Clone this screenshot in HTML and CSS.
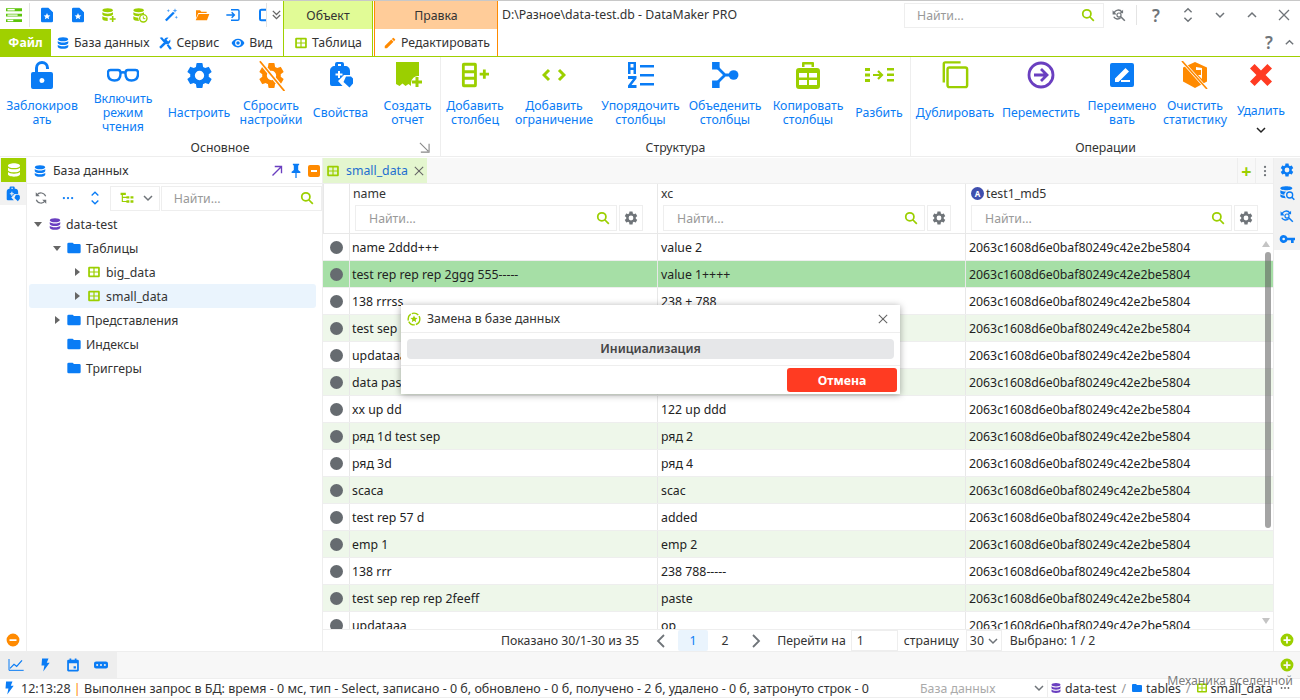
FILE: index.html
```html
<!DOCTYPE html>
<html lang="ru">

<head>
    <meta charset="UTF-8">
    <title>DataMaker PRO</title>
    <link rel="stylesheet" href="styles.css">
</head>

<body>
    <svg class="sprite">
        <symbol id="db" viewBox="0 0 24 24"><path d="M12 2c5 0 9 1.600 9 3.500S17 9 12 9 3 7.400 3 5.500 7 2 12 2zM3 8.500C4.500 10.300 8 11 12 11s7.500-.7 9-2.500V12c0 1.900-4 3.500-9 3.500S3 13.900 3 12zM3 15c1.500 1.800 5 2.500 9 2.500s7.500-.7 9-2.500v3.500c0 1.900-4 3.500-9 3.500s-9-1.600-9-3.500z"/></symbol>
        <symbol id="table" viewBox="0 0 24 24"><path fill-rule="evenodd" d="M4 3h16a2 2 0 012 2v14a2 2 0 01-2 2H4a2 2 0 01-2-2V5a2 2 0 012-2zm1 3v5h6V6zm8 0v5h6V6zM5 13v5h6v-5zm8 0v5h6v-5z"/></symbol>
        <symbol id="gear" viewBox="0 0 24 24"><path d="M19.140 12.940c.04-.3.06-.61.06-.94 0-.32-.02-.64-.07-.94l2.030-1.580a.49.49 0 00.12-.61l-1.920-3.320a.488.488 0 00-.59-.22l-2.390.96c-.5-.38-1.030-.7-1.620-.94l-.36-2.540a.484.484 0 00-.48-.41h-3.840c-.24 0-.43.17-.47.41l-.36 2.540c-.59.24-1.130.57-1.620.94l-2.390-.96c-.22-.08-.47 0-.59.22L2.740 8.870c-.12.21-.08.47.12.61l2.030 1.580c-.05.3-.09.63-.09.94s.02.64.07.94l-2.030 1.580a.49.49 0 00-.12.61l1.920 3.320c.12.22.37.29.59.22l2.390-.96c.5.38 1.030.7 1.620.94l.36 2.540c.05.24.24.41.48.41h3.840c.24 0 .44-.17.47-.41l.36-2.540c.59-.24 1.130-.56 1.620-.94l2.390.96c.22.08.47 0 .59-.22l1.920-3.320c.12-.22.07-.47-.12-.61zM12 15.600a3.600 3.600 0 110-7.200 3.600 3.600 0 010 7.200z"/></symbol>
        <symbol id="search" viewBox="0 0 24 24"><circle cx="10" cy="10" r="7" fill="none" stroke="currentColor" stroke-width="3"/><path d="M15 15l7 7" stroke="currentColor" stroke-width="3"/></symbol>
        <symbol id="folder" viewBox="0 0 24 24"><path d="M10 4H4a2 2 0 00-2 2v12a2 2 0 002 2h16a2 2 0 002-2V8a2 2 0 00-2-2h-8z"/></symbol>
        <symbol id="bolt" viewBox="0 0 24 24"><path d="M7 1h11l-3 7h5L9 23l2-10H6z"/></symbol>
        <symbol id="chev-down" viewBox="0 0 12 12"><path d="M2 4l4 4 4-4" fill="none" stroke="currentColor" stroke-width="1.500"/></symbol>
        <symbol id="chev-up" viewBox="0 0 12 12"><path d="M2 8l4-4 4 4" fill="none" stroke="currentColor" stroke-width="1.500"/></symbol>
        <symbol id="chev-left" viewBox="0 0 10 14"><path d="M8 1L2 7l6 6" fill="none" stroke="currentColor" stroke-width="1.800"/></symbol>
        <symbol id="chev-right" viewBox="0 0 10 14"><path d="M2 1l6 6-6 6" fill="none" stroke="currentColor" stroke-width="1.800"/></symbol>
        <symbol id="chev-double" viewBox="0 0 12 12"><path d="M2 1.500l4 4 4-4M2 6l4 4 4-4" fill="none" stroke="currentColor" stroke-width="1.400"/></symbol>
        <symbol id="updown" viewBox="0 0 12 20"><path d="M2 7l4-4 4 4M2 13l4 4 4-4" fill="none" stroke="currentColor" stroke-width="1.600"/></symbol>
        <symbol id="close" viewBox="0 0 12 12"><path d="M1 1l10 10M11 1L1 11" fill="none" stroke="currentColor" stroke-width="1.300"/></symbol>
        <symbol id="page" viewBox="0 0 24 24"><path fill-rule="evenodd" d="M5 1h9l7 7v13a2 2 0 01-2 2H5a2 2 0 01-2-2V3a2 2 0 012-2zm7 8l-1.500 3.200-3.500.4 2.600 2.300-.7 3.400 3.100-1.700 3.100 1.700-.7-3.400 2.600-2.300-3.500-.4z"/></symbol>
        <symbol id="db-plus" viewBox="0 0 24 24"><path d="M10 2c4.500 0 8 1.300 8 3s-3.500 3-8 3-8-1.300-8-3 3.500-3 8-3zM2 8c1.500 1.300 4.500 2 8 2s6.500-.7 8-2v3c0 1.500-3.500 3-8 3s-8-1.500-8-3zm0 6c1.500 1.300 4.500 2 8 2v5c-4.500 0-8-1.300-8-3z"/><path d="M13 18h9M17.500 13.500v9" stroke="currentColor" stroke-width="2.400"/></symbol>
        <symbol id="db-clock" viewBox="0 0 24 24"><path d="M10 2c4.500 0 8 1.300 8 3s-3.500 3-8 3-8-1.300-8-3 3.500-3 8-3zM2 8c1.500 1.300 4.500 2 8 2s6.500-.7 8-2v3c-4 0-7 1.500-8 3-4.500 0-8-1.500-8-3zm0 6c1.500 1.300 4.500 2 7.500 2 0 2 .3 3.500 1 5-5-.1-8.500-1.300-8.500-3z"/><circle cx="17" cy="17" r="5.500" fill="none" stroke="currentColor" stroke-width="2"/><path d="M17 14v3.500h3" fill="none" stroke="currentColor" stroke-width="1.500"/></symbol>
        <symbol id="wand" viewBox="0 0 24 24"><path d="M3 19L15 7l2.500 2.500-12 12z"/><path d="M18 2l1 2.500 2.500 1-2.500 1-1 2.500-1-2.500-2.500-1 2.500-1zM8 3l.7 1.800 1.800.7-1.800.7L8 8l-.7-1.800-1.800-.7 1.800-.7zM20 13l.7 1.800 1.800.7-1.800.7-.7 1.800-.7-1.800-1.800-.7 1.800-.7z" opacity=".75"/></symbol>
        <symbol id="open" viewBox="0 0 24 24"><path d="M3 5h6l2 2h8v2H6.500L3 17z"/><path d="M7 10.500h16L19.500 20H2.500z"/></symbol>
        <symbol id="import" viewBox="0 0 24 24"><path d="M9 4h10a2 2 0 012 2v12a2 2 0 01-2 2H9" fill="none" stroke="currentColor" stroke-width="2.200"/><path d="M2 12h11M10 8l4 4-4 4" fill="none" stroke="currentColor" stroke-width="2.200"/></symbol>
        <symbol id="export-box" viewBox="0 0 24 24"><path d="M24 4H5a2 2 0 00-2 2v12a2 2 0 002 2h19" fill="none" stroke="currentColor" stroke-width="3"/><path d="M14 12h10" stroke="currentColor" stroke-width="3"/></symbol>
        <symbol id="tools" viewBox="0 0 24 24"><path d="M21 6l-3.500 3.500-3-3L18 3a6 6 0 00-7.800 7.500L2 19l3 3 8.500-8.200A6 6 0 0021 6z"/><path d="M3 3l4-1 5 6-2.500 2.500zM15 16l2.500-2.500 5 6a2 2 0 01-3 3z"/></symbol>
        <symbol id="eye" viewBox="0 0 24 24"><path fill-rule="evenodd" d="M12 4.500c5 0 9.300 3.100 11 7.500-1.700 4.400-6 7.500-11 7.500S2.700 16.400 1 12c1.700-4.400 6-7.500 11-7.500zM12 7a5 5 0 100 10 5 5 0 000-10zm0 2a3 3 0 110 6 3 3 0 010-6z"/></symbol>
        <symbol id="pencil" viewBox="0 0 24 24"><path d="M3 17.200V21h3.800L18 9.800 14.200 6zM20.700 7a1 1 0 000-1.400l-2.300-2.300a1 1 0 00-1.400 0l-1.800 1.800L19 8.800z"/></symbol>
        <symbol id="lock" viewBox="0 0 24 30"><path fill-rule="evenodd" d="M3 12h2V8a7 7 0 0114 0v1h-3V8a4 4 0 00-8 0v4h13a2 2 0 012 2v13a2 2 0 01-2 2H3a2 2 0 01-2-2V14a2 2 0 012-2zm9 6a2.500 2.500 0 100 5 2.500 2.500 0 000-5z"/></symbol>
        <symbol id="glasses" viewBox="0 0 32 16"><path d="M1 5.500c0-1.500 1-2.500 2.500-2.500H11c1.500 0 2.500 1 2.500 3v1c0 4-2 6.500-6 6.500S1 11 1 7zM18.500 7V6c0-2 1-3 2.500-3h7.500C30 3 31 4 31 5.500V7c0 4-2.500 6.500-6.500 6.500s-6-2.500-6-6.500zM13.500 6c1.500-1 3.500-1 5 0" fill="none" stroke="currentColor" stroke-width="2.400"/></symbol>
        <symbol id="gear-off" viewBox="0 0 24 24"><use href="#gear"/><path d="M3 1l19 23" stroke="#fff" stroke-width="3.200"/><path d="M3 1l19 23" stroke="currentColor" stroke-width="1.400"/></symbol>
        <symbol id="case" viewBox="0 0 24 28"><path fill-rule="evenodd" d="M8 1h5a2 2 0 012 2v2h1c3 0 5 2 5 5v4h-6l-6 6 4.500 5H3a2 2 0 01-2-2V10c0-3 2-5 5-5V3a2 2 0 012-2zm1 2v2h3V3zM9 10v2.500H6.500v2H9V17h2v-2.500h2.500v-2H11V10zM17 15.500h5l2 2v5l-3.500 4-6-5.500z"/></symbol>
        <symbol id="report" viewBox="0 0 28 28"><path d="M2 1h23v14a7 7 0 00-8 7v3l-2.500-2-3 2-3-2.500-3 2.500-3.500-2z"/><path d="M18 21h10M23 16v10" stroke="currentColor" stroke-width="3"/></symbol>
        <symbol id="col-add" viewBox="0 0 30 28"><path fill-rule="evenodd" d="M3 1h12a2 2 0 012 2v22a2 2 0 01-2 2H3a2 2 0 01-2-2V3a2 2 0 012-2zm1 3v5h10V4zm0 8v4h10v-4zm0 7v5h10v-5z"/><path d="M20 13h10M25 8v10" stroke="currentColor" stroke-width="3"/></symbol>
        <symbol id="code" viewBox="0 0 24 14"><path d="M7 2L2 7l5 5M17 2l5 5-5 5" fill="none" stroke="currentColor" stroke-width="3"/></symbol>
        <symbol id="sort" viewBox="0 0 28 28"><path fill-rule="evenodd" d="M1 1h8v12H6.500V9h-3v4H1zm2.500 2v3.500h3V3z"/><path d="M1 15h8.500v2.500L4.500 24h5v3H1v-2.500L6 18H1z"/><path d="M13 4h14v2.500H13zM13 13h14v2.500H13zM13 22h14v2.500H13z"/></symbol>
        <symbol id="merge" viewBox="0 0 26 26"><path d="M1 1h7v7H1zM1 18h7v7H1z"/><circle cx="21" cy="13" r="4.500"/><path d="M6 6l7 7-7 7M13 13h6" fill="none" stroke="currentColor" stroke-width="2.600"/></symbol>
        <symbol id="col-copy" viewBox="0 0 26 28"><path fill-rule="evenodd" d="M8 1h10a1 1 0 011 1v4h-2.500V3.500h-7V6H7V2a1 1 0 011-1zM4 7h18a3 3 0 013 3v15a3 3 0 01-3 3H4a3 3 0 01-3-3V10a3 3 0 013-3zm0 5v4.500h8V12zm10 0v4.500h8V12zM4 19v5h8v-5zm10 0v5h8v-5z"/></symbol>
        <symbol id="split" viewBox="0 0 30 20"><path d="M1 3h5v3H1zM1 8.500h5v3H1zM1 14h5v3H1zM23 3h7v2.500h-7zM23 8.500h7V11h-7zM23 14h7v2.500h-7z"/><path d="M9 10h8M14 6l4 4-4 4" fill="none" stroke="currentColor" stroke-width="2.200"/></symbol>
        <symbol id="copy" viewBox="0 0 28 30"><path d="M8 7h17a2 2 0 012 2v17a2 2 0 01-2 2H8a2 2 0 01-2-2V9a2 2 0 012-2z" fill="none" stroke="currentColor" stroke-width="2.600"/><path d="M2 23V3a1.500 1.500 0 011.500-1.500H20" fill="none" stroke="currentColor" stroke-width="2.600"/></symbol>
        <symbol id="move" viewBox="0 0 28 28"><circle cx="14" cy="14" r="12" fill="none" stroke="currentColor" stroke-width="2.800"/><path d="M7 14h13M14 8l6 6-6 6" fill="none" stroke="currentColor" stroke-width="2.800"/></symbol>
        <symbol id="rename" viewBox="0 0 24 24"><path fill-rule="evenodd" d="M2 0h20a2 2 0 012 2v20a2 2 0 01-2 2H2a2 2 0 01-2-2V2a2 2 0 012-2zm13.500 5L5 15.500V19h3.500L19 8.500zM11 17v2h9v-2z"/></symbol>
        <symbol id="clear" viewBox="0 0 26 28"><path fill-rule="evenodd" d="M13 1l12 5.500v14L13 27 1 20.500v-14zM14 6v3h5v5h-3l4 4V7z"/><path d="M0 0l25 28" stroke="#fff" stroke-width="3"/><path d="M0 0l25 28" stroke="currentColor" stroke-width="1.600"/></symbol>
        <symbol id="cross" viewBox="0 0 24 24"><path d="M5 0l7 7 7-7 5 5-7 7 7 7-5 5-7-7-7 7-5-5 7-7-7-7z"/></symbol>
        <symbol id="refresh" viewBox="0 0 24 24"><path d="M20 9a8.500 8.500 0 00-15-2M4 15a8.500 8.500 0 0015 2" fill="none" stroke="currentColor" stroke-width="2"/><path d="M3 2v7h7M21 22v-7h-7"/></symbol>
        <symbol id="find-replace" viewBox="0 0 24 24"><path d="M17 7a7.500 7.500 0 00-13.500 2M3 15a7.500 7.500 0 0012 1.500" fill="none" stroke="currentColor" stroke-width="2.400"/><path d="M1 4v7h7zM19 3v6h-6z"/><circle cx="12" cy="12" r="3.500" fill="none" stroke="currentColor" stroke-width="2"/><path d="M15 15l7 7" stroke="currentColor" stroke-width="2.600"/></symbol>
        <symbol id="tree" viewBox="0 0 24 20"><path d="M1 1h9v4H1zM3 5h2v12H3zM3 8h8v2H3zM3 15h8v2H3zM11 7h5v4h-5zM11 14h5v4h-5zM18 7h5v4h-5zM18 14h5v4h-5z"/></symbol>
        <symbol id="arrow-ne" viewBox="0 0 16 16"><path d="M2 14L13 3M5 2h9v9" fill="none" stroke="currentColor" stroke-width="1.800"/></symbol>
        <symbol id="arrow-se" viewBox="0 0 12 12"><path d="M1 1l9 9M2 11h9V2" fill="none" stroke="currentColor" stroke-width="1.200"/></symbol>
        <symbol id="pin" viewBox="0 0 16 24"><path d="M3 1h10v2l-1.500 1v7L15 14v2H9v8H7v-8H1v-2l3.500-3V4L3 3z"/></symbol>
        <symbol id="caret-d" viewBox="0 0 8 8"><path d="M0 2h8L4 7z"/></symbol>
        <symbol id="caret-r" viewBox="0 0 8 8"><path d="M2 0v8l5-4z"/></symbol>
        <symbol id="dots" viewBox="0 0 16 4"><circle cx="2.500" cy="2" r="1.500"/><circle cx="8" cy="2" r="1.500"/><circle cx="13.500" cy="2" r="1.500"/></symbol>
        <symbol id="kebab" viewBox="0 0 4 16"><circle cx="2" cy="2.500" r="1.500"/><circle cx="2" cy="8" r="1.500"/><circle cx="2" cy="13.500" r="1.500"/></symbol>
        <symbol id="key" viewBox="0 0 24 14"><path fill-rule="evenodd" d="M7 1a6 6 0 015.700 4H24v4h-2v4h-4V9h-5.300A6 6 0 117 1zm0 4a2 2 0 100 4 2 2 0 000-4z"/></symbol>
        <symbol id="db-find" viewBox="0 0 24 24"><path d="M11 2c5 0 9 1.300 9 3s-4 3-9 3-9-1.300-9-3 4-3 9-3zM2 8c1.500 1.300 5 2 9 2-2 1-3 2.500-3 4.500-3.500-.2-6-1.500-6-3zm0 6c1.500 1.200 4 1.800 6.500 2 .3 1.500 1 3 2 4C6 20 2 18.700 2 17z"/><circle cx="16" cy="15" r="4.500" fill="none" stroke="currentColor" stroke-width="2"/><path d="M19 18l4 4" stroke="currentColor" stroke-width="2.200"/></symbol>
        <symbol id="chart" viewBox="0 0 24 20"><path d="M1.500 1v17h22" fill="none" stroke="currentColor" stroke-width="1.500"/><path d="M3 15l6-6 4 3 8-9" fill="none" stroke="currentColor" stroke-width="1.800"/></symbol>
        <symbol id="calendar" viewBox="0 0 24 24"><path fill-rule="evenodd" d="M6 1h3v2h6V1h3v2h2a2 2 0 012 2v16a2 2 0 01-2 2H4a2 2 0 01-2-2V5a2 2 0 012-2h2zM5 9v11h14V9zm8 5h4v4h-4z"/></symbol>
        <symbol id="pill-dots" viewBox="0 0 20 12"><path fill-rule="evenodd" d="M3 1h14a3 3 0 013 3v4a3 3 0 01-3 3H3a3 3 0 01-3-3V4a3 3 0 013-3zm1.500 3.500a1.500 1.500 0 100 3 1.500 1.500 0 000-3zm5.500 0a1.500 1.500 0 100 3 1.500 1.500 0 000-3zm5.500 0a1.500 1.500 0 100 3 1.500 1.500 0 000-3z"/></symbol>
        <symbol id="minus-circle" viewBox="0 0 24 24"><path fill-rule="evenodd" d="M12 1a11 11 0 110 22 11 11 0 010-22zM6 10.500v3h12v-3z"/></symbol>
        <symbol id="plus-circle" viewBox="0 0 24 24"><path fill-rule="evenodd" d="M12 1a11 11 0 110 22 11 11 0 010-22zm-1.500 5v4.500H6v3h4.500V18h3v-4.500H18v-3h-4.500V6z"/></symbol>
        <symbol id="star-ring" viewBox="0 0 24 24"><circle cx="12" cy="12" r="10" fill="none" stroke="currentColor" stroke-width="2.400" stroke-dasharray="12 2"/><path d="M12 6l1.800 4 4.200.4-3.200 2.800 1 4.300-3.800-2.300-3.800 2.300 1-4.300L6 10.400l4.200-.4z"/></symbol>
    </svg>

    <header class="top">
        <div class="top-left">
            <div class="quick">
                <svg class="menu-icon" viewBox="0 0 22 20"><path d="M0 0h22v4H0zM0 7.500h22v4H0zM0 15h22v4H0z" fill="#5cc40a"/><path d="M2 1h10v2H2zM2 8.500h14v2H2zM2 16h8v2H2z" fill="#fff"/></svg>
                <span class="quick-sep"></span>
                <svg class="qi blue"><use href="#page"/></svg>
                <svg class="qi blue"><use href="#page"/></svg>
                <svg class="qi green"><use href="#db-plus"/></svg>
                <svg class="qi green"><use href="#db-clock"/></svg>
                <svg class="qi blue"><use href="#wand"/></svg>
                <svg class="qi orange"><use href="#open"/></svg>
                <svg class="qi blue"><use href="#import"/></svg>
                <span class="qi-cut"><svg class="qi blue"><use href="#export-box"/></svg></span>
                <span class="quick-sep2"></span>
                <svg class="qi-more"><use href="#chev-double"/></svg>
            </div>
            <nav class="menu">
                <span class="menu-file">Файл</span>
                <span class="menu-item"><svg class="i14 blue"><use href="#db"/></svg>База данных</span>
                <span class="menu-item"><svg class="i14 blue"><use href="#tools"/></svg>Сервис</span>
                <span class="menu-item"><svg class="i14 blue"><use href="#eye"/></svg>Вид</span>
            </nav>
        </div>
        <div class="ctx ctx-object">
            <div class="ctx-title">Объект</div>
            <div class="ctx-tab"><svg class="i14 green"><use href="#table"/></svg>Таблица</div>
        </div>
        <div class="ctx ctx-edit">
            <div class="ctx-title">Правка</div>
            <div class="ctx-tab"><svg class="i14 orange"><use href="#pencil"/></svg>Редактировать</div>
        </div>
        <div class="top-right">
            <div class="title-row">
                <span class="app-title">D:\Разное\data-test.db - DataMaker PRO</span>
                <div class="top-search"><span>Найти...</span><svg class="i14 green"><use href="#search"/></svg></div>
                <svg class="i14 grey find-replace"><use href="#find-replace"/></svg>
                <span class="title-sep"></span>
                <span class="help">?</span>
                <svg class="win updown"><use href="#updown"/></svg>
                <svg class="win"><use href="#chev-down"/></svg>
                <svg class="win"><use href="#chev-up"/></svg>
                <svg class="win"><use href="#close"/></svg>
            </div>
            <div class="sub-row">
                <span class="help">?</span>
                <svg class="win-small"><use href="#chev-up"/></svg>
            </div>
        </div>
    </header>

    <section class="ribbon">
        <div class="group group-main">
            <div class="btns">
                <div class="btn"><div class="btn-icon"><svg class="blue ic-lock"><use href="#lock"/></svg></div><div class="btn-label">Заблокиров<br>ать</div></div>
                <div class="btn"><div class="btn-icon"><svg class="blue ic-glasses"><use href="#glasses"/></svg></div><div class="btn-label">Включить<br>режим<br>чтения</div></div>
                <div class="btn"><div class="btn-icon"><svg class="blue ic-gear"><use href="#gear"/></svg></div><div class="btn-label">Настроить</div></div>
                <div class="btn"><div class="btn-icon"><svg class="orange ic-gear"><use href="#gear-off"/></svg></div><div class="btn-label">Сбросить<br>настройки</div></div>
                <div class="btn"><div class="btn-icon"><svg class="blue ic-big"><use href="#case"/></svg></div><div class="btn-label">Свойства</div></div>
                <div class="btn"><div class="btn-icon"><svg class="green ic-big"><use href="#report"/></svg></div><div class="btn-label">Создать<br>отчет</div></div>
            </div>
            <div class="group-name">Основное<svg class="expand"><use href="#arrow-se"/></svg></div>
        </div>
        <div class="group group-struct">
            <div class="btns">
                <div class="btn"><div class="btn-icon"><svg class="green ic-big"><use href="#col-add"/></svg></div><div class="btn-label">Добавить<br>столбец</div></div>
                <div class="btn"><div class="btn-icon"><svg class="green ic-code"><use href="#code"/></svg></div><div class="btn-label">Добавить<br>ограничение</div></div>
                <div class="btn"><div class="btn-icon"><svg class="blue ic-big"><use href="#sort"/></svg></div><div class="btn-label">Упорядочить<br>столбцы</div></div>
                <div class="btn"><div class="btn-icon"><svg class="blue ic-big"><use href="#merge"/></svg></div><div class="btn-label">Объеденить<br>столбцы</div></div>
                <div class="btn"><div class="btn-icon"><svg class="green ic-big"><use href="#col-copy"/></svg></div><div class="btn-label">Копировать<br>столбцы</div></div>
                <div class="btn"><div class="btn-icon"><svg class="green ic-split"><use href="#split"/></svg></div><div class="btn-label">Разбить</div></div>
            </div>
            <div class="group-name">Структура</div>
        </div>
        <div class="group group-ops">
            <div class="btns">
                <div class="btn"><div class="btn-icon"><svg class="green ic-big"><use href="#copy"/></svg></div><div class="btn-label">Дублировать</div></div>
                <div class="btn"><div class="btn-icon"><svg class="purple ic-big"><use href="#move"/></svg></div><div class="btn-label">Переместить</div></div>
                <div class="btn"><div class="btn-icon"><svg class="blue ic-rename"><use href="#rename"/></svg></div><div class="btn-label">Переимено<br>вать</div></div>
                <div class="btn"><div class="btn-icon"><svg class="orange ic-big"><use href="#clear"/></svg></div><div class="btn-label">Очистить<br>статистику</div></div>
                <div class="btn btn-delete"><div class="btn-icon"><svg class="red ic-cross"><use href="#cross"/></svg></div><div class="btn-label">Удалить<svg class="del-more"><use href="#chev-down"/></svg></div></div>
            </div>
            <div class="group-name">Операции</div>
        </div>
    </section>

    <main class="work">
        <aside class="strip strip-left">
            <div class="strip-top">
                <div class="strip-item active"><svg class="i16 white"><use href="#db"/></svg></div>
                <div class="strip-item"><svg class="i16 blue"><use href="#case"/></svg></div>
            </div>
            <svg class="i14 orange strip-bottom"><use href="#minus-circle"/></svg>
        </aside>

        <aside class="db-panel">
            <div class="panel-head">
                <svg class="i14 blue"><use href="#db"/></svg>
                <span class="panel-title">База данных</span>
                <svg class="i12 purple"><use href="#arrow-ne"/></svg>
                <svg class="pin blue"><use href="#pin"/></svg>
                <span class="minus-box"></span>
            </div>
            <div class="panel-tools">
                <svg class="i14 grey"><use href="#refresh"/></svg>
                <svg class="i12 blue tool-dots"><use href="#dots"/></svg>
                <svg class="tool-updown blue"><use href="#updown"/></svg>
                <div class="tree-mode"><svg class="i14 green"><use href="#tree"/></svg><svg class="i12 grey"><use href="#chev-down"/></svg></div>
                <div class="panel-search"><span>Найти...</span><svg class="i14 green"><use href="#search"/></svg></div>
            </div>
            <ul class="tree">
                <li class="lvl0"><svg class="caret"><use href="#caret-d"/></svg><svg class="i14 purple"><use href="#db"/></svg>data-test</li>
                <li class="lvl1"><svg class="caret"><use href="#caret-d"/></svg><svg class="i14 blue"><use href="#folder"/></svg>Таблицы</li>
                <li class="lvl2"><svg class="caret"><use href="#caret-r"/></svg><svg class="i14 green"><use href="#table"/></svg>big_data</li>
                <li class="lvl2 selected"><svg class="caret"><use href="#caret-r"/></svg><svg class="i14 green"><use href="#table"/></svg>small_data</li>
                <li class="lvl1"><svg class="caret"><use href="#caret-r"/></svg><svg class="i14 blue"><use href="#folder"/></svg>Представления</li>
                <li class="lvl1"><span class="caret"></span><svg class="i14 blue"><use href="#folder"/></svg>Индексы</li>
                <li class="lvl1"><span class="caret"></span><svg class="i14 blue"><use href="#folder"/></svg>Триггеры</li>
            </ul>
        </aside>

        <section class="data">
            <div class="tabs">
                <div class="tab"><svg class="i14 green"><use href="#table"/></svg><span>small_data</span><svg class="tab-close"><use href="#close"/></svg></div>
                <div class="tabs-end">
                    <span class="tabs-btn"><b class="plus">+</b></span>
                    <span class="tabs-btn"><svg class="i12 grey"><use href="#kebab"/></svg></span>
                </div>
            </div>
            <div class="cols">
                <div class="col-cell"></div>
                <div class="col-cell">
                    <div class="col-name">name</div>
                    <div class="col-filter"><div class="filter-input"><span>Найти...</span><svg class="i14 green"><use href="#search"/></svg></div><div class="filter-gear"><svg class="i16 grey"><use href="#gear"/></svg></div></div>
                </div>
                <div class="col-cell">
                    <div class="col-name">xc</div>
                    <div class="col-filter"><div class="filter-input"><span>Найти...</span><svg class="i14 green"><use href="#search"/></svg></div><div class="filter-gear"><svg class="i16 grey"><use href="#gear"/></svg></div></div>
                </div>
                <div class="col-cell">
                    <div class="col-name"><span class="col-badge">A</span>test1_md5</div>
                    <div class="col-filter"><div class="filter-input"><span>Найти...</span><svg class="i14 green"><use href="#search"/></svg></div><div class="filter-gear"><svg class="i16 grey"><use href="#gear"/></svg></div></div>
                </div>
            </div>
            <div class="rows">
                <div class="row"><div class="mark"><i></i></div><div>name 2ddd+++</div><div>value 2</div><div>2063c1608d6e0baf80249c42e2be5804</div></div>
                <div class="row sel"><div class="mark"><i></i></div><div>test rep rep rep 2ggg 555-----</div><div>value 1++++</div><div>2063c1608d6e0baf80249c42e2be5804</div></div>
                <div class="row"><div class="mark"><i></i></div><div>138 rrrss</div><div>238 + 788</div><div>2063c1608d6e0baf80249c42e2be5804</div></div>
                <div class="row alt"><div class="mark"><i></i></div><div>test sep rep rep</div><div>paste</div><div>2063c1608d6e0baf80249c42e2be5804</div></div>
                <div class="row"><div class="mark"><i></i></div><div>updataaa</div><div>op</div><div>2063c1608d6e0baf80249c42e2be5804</div></div>
                <div class="row alt"><div class="mark"><i></i></div><div>data paste</div><div>value</div><div>2063c1608d6e0baf80249c42e2be5804</div></div>
                <div class="row"><div class="mark"><i></i></div><div>xx up dd</div><div>122 up ddd</div><div>2063c1608d6e0baf80249c42e2be5804</div></div>
                <div class="row alt"><div class="mark"><i></i></div><div>ряд 1d test sep</div><div>ряд 2</div><div>2063c1608d6e0baf80249c42e2be5804</div></div>
                <div class="row"><div class="mark"><i></i></div><div>ряд 3d</div><div>ряд 4</div><div>2063c1608d6e0baf80249c42e2be5804</div></div>
                <div class="row alt"><div class="mark"><i></i></div><div>scaca</div><div>scac</div><div>2063c1608d6e0baf80249c42e2be5804</div></div>
                <div class="row"><div class="mark"><i></i></div><div>test rep 57 d</div><div>added</div><div>2063c1608d6e0baf80249c42e2be5804</div></div>
                <div class="row alt"><div class="mark"><i></i></div><div>emp 1</div><div>emp 2</div><div>2063c1608d6e0baf80249c42e2be5804</div></div>
                <div class="row"><div class="mark"><i></i></div><div>138 rrr</div><div>238 788-----</div><div>2063c1608d6e0baf80249c42e2be5804</div></div>
                <div class="row alt"><div class="mark"><i></i></div><div>test sep rep rep 2feeff</div><div>paste</div><div>2063c1608d6e0baf80249c42e2be5804</div></div>
                <div class="row"><div class="mark"><i></i></div><div>updataaa</div><div>op</div><div>2063c1608d6e0baf80249c42e2be5804</div></div>
                <span class="scroll-up"></span>
                <span class="scroll-thumb"></span>
                <span class="scroll-down"></span>
            </div>
            <div class="pager">
                <span>Показано 30/1-30 из 35</span>
                <svg class="pager-arrow prev"><use href="#chev-left"/></svg>
                <span class="page-num current">1</span>
                <span class="page-num">2</span>
                <svg class="pager-arrow next"><use href="#chev-right"/></svg>
                <span class="goto">Перейти на</span>
                <span class="goto-input">1</span>
                <span class="goto-after">страницу</span>
                <span class="page-size">30<svg class="i12 grey"><use href="#chev-down"/></svg></span>
                <span class="picked">Выбрано: 1 / 2</span>
            </div>
        </section>

        <aside class="strip strip-right">
            <div class="strip-top">
                <div class="strip-item"><svg class="i16 blue"><use href="#gear"/></svg></div>
                <div class="strip-item"><svg class="i16 blue"><use href="#db-find"/></svg></div>
                <div class="strip-item"><svg class="i14 blue"><use href="#find-replace"/></svg></div>
                <div class="strip-item"><svg class="i16 blue"><use href="#key"/></svg></div>
            </div>
            <svg class="i14 green strip-bottom"><use href="#plus-circle"/></svg>
        </aside>
    </main>

    <div class="tool-strip">
        <div class="tool-icons">
            <svg class="i16 blue"><use href="#chart"/></svg>
            <svg class="i14 blue"><use href="#bolt"/></svg>
            <svg class="i14 blue"><use href="#calendar"/></svg>
            <svg class="i14 blue"><use href="#pill-dots"/></svg>
        </div>
        <svg class="i14 green tool-plus"><use href="#plus-circle"/></svg>
    </div>

    <footer class="status">
        <svg class="i14 blue"><use href="#bolt"/></svg>
        <span class="status-text">12:13:28 <b class="bar">|</b> Выполнен запрос в БД: время - 0 мс, тип - Select, записано - 0 б, обновлено - 0 б, получено - 2 б, удалено - 0 б, затронуто строк - 0</span>
        <div class="status-combo"><span>База данных</span><svg class="i12 grey"><use href="#chev-down"/></svg></div>
        <div class="crumbs">
            <svg class="i12 purple"><use href="#db"/></svg><span>data-test</span><em>/</em>
            <svg class="i12 blue"><use href="#folder"/></svg><span>tables</span><em>/</em>
            <svg class="i12 green"><use href="#table"/></svg><span>small_data</span>
        </div>
        <svg class="status-dots"><use href="#dots"/></svg>
    </footer>

    <div class="dialog">
        <div class="dialog-head">
            <svg class="i14 green"><use href="#star-ring"/></svg>
            <span class="dialog-title">Замена в базе данных</span>
            <svg class="dialog-close"><use href="#close"/></svg>
        </div>
        <div class="dialog-body"><div class="progress">Инициализация</div></div>
        <div class="dialog-foot"><button class="cancel">Отмена</button></div>
    </div>

    <div class="watermark">Механика вселенной</div>
</body>

</html>
```

FILE: styles.css
```css
* {
    box-sizing: border-box;
}

body {
    margin: 0;
    width: 1300px;
    height: 700px;
    overflow: hidden;
    position: relative;
    background-color: white;
    font-family: "Noto Sans", "Open Sans", sans-serif;
    font-size: 12.3px;
    color: #333;
}

svg {
    display: block;
    flex: none;
    fill: currentColor;
}

.sprite {
    display: none;
}

.blue { color: #0a7cf5; }
.green { color: #9bcf00; }
.orange { color: #ff8a00; }
.purple { color: #6a3fc0; }
.red { color: #ff3b22; }
.grey { color: #6f7479; }
.white { color: white; }

.i12 { width: 12px; height: 12px; }
.i14 { width: 14px; height: 14px; }
.i16 { width: 16px; height: 16px; }

/* top bar */
.top {
    display: flex;
    height: 57px;
    border-top: 1px solid #c8c8c8;
    border-bottom: 1px solid #a0d000;
}

.top-left {
    width: 284px;
    border-right: 1px solid #a0d000;
    flex: none;
}

.quick {
    height: 28px;
    display: flex;
    align-items: center;
}

.menu-icon {
    width: 16px;
    height: 15px;
    margin-left: 6px;
}

.quick-sep {
    width: 1px;
    height: 24px;
    background-color: #e4e4e4;
    margin-left: 7px;
}

.qi {
    width: 16px;
    height: 16px;
    margin-left: 15px;
}

.quick-sep + .qi {
    margin-left: 9px;
}

.qi-cut {
    width: 8px;
    margin-left: 17px;
    overflow: hidden;
}

.qi-cut .qi {
    margin-left: 0;
}

.quick-sep2 {
    width: 1px;
    height: 24px;
    background-color: #e4e4e4;
}

.qi-more {
    width: 11px;
    height: 12px;
    margin-left: 4px;
    color: #666;
}

.menu {
    height: 27px;
    display: flex;
    align-items: center;
}

.menu-file {
    width: 51px;
    height: 27px;
    background-color: #a0d000;
    color: white;
    font-weight: 700;
    display: flex;
    align-items: center;
    justify-content: center;
}

.menu-item {
    display: flex;
    align-items: center;
    gap: 4px;
    margin-right: 3px;
}

.menu-item:nth-child(2) { margin-left: 5px; }
.menu-item:nth-child(3) { margin-left: 6px; }
.menu-item:nth-child(4) { margin-left: 9px; }

.ctx {
    flex: none;
    display: flex;
    flex-direction: column;
}

.ctx-title {
    height: 28px;
    display: flex;
    align-items: center;
    justify-content: center;
}

.ctx-tab {
    height: 27px;
    display: flex;
    align-items: center;
    gap: 4px;
    padding-left: 10px;
}

.ctx-object {
    width: 89px;
    border-right: 1px solid #a0d000;
}

.ctx-object .ctx-title {
    background-color: #e1fb96;
}

.ctx-edit {
    width: 124px;
    margin-left: 1px;
    border-left: 1px solid #ff8a00;
    border-right: 1px solid #ff8a00;
}

.ctx-edit .ctx-title {
    background-color: #ffcc99;
}

.ctx-edit .ctx-tab {
    padding-left: 8px;
}

.top-right {
    flex: 1;
    display: flex;
    flex-direction: column;
}

.title-row {
    height: 28px;
    display: flex;
    align-items: center;
    padding-left: 4px;
}

.app-title {
    width: 402px;
    margin-bottom: 2px;
    white-space: nowrap;
}

.top-search {
    width: 200px;
    height: 25px;
    border: 1px solid #eee;
    display: flex;
    align-items: center;
    justify-content: space-between;
    padding: 0 8px 0 12px;
    color: #999;
}

.find-replace {
    margin-left: 8px;
}

.title-sep {
    width: 1px;
    height: 20px;
    background-color: #e4e4e4;
    margin: 0 13px 0 10px;
}

.help {
    width: 12px;
    font-size: 17px;
    font-weight: 600;
    line-height: 1;
    color: #6f7479;
    text-align: center;
}

.win {
    width: 12px;
    height: 12px;
    margin-left: 20px;
    color: #6f7479;
}

.win.updown {
    height: 18px;
}

.sub-row {
    height: 27px;
    display: flex;
    align-items: center;
    justify-content: flex-end;
    padding-right: 5px;
    gap: 9px;
}

.win-small {
    width: 11px;
    height: 11px;
    color: #6f7479;
}

/* ribbon */
.ribbon {
    display: flex;
    height: 100px;
    border-bottom: 1px solid #eee;
}

.group {
    border-right: 1px solid #eee;
    display: flex;
    flex-direction: column;
}

.group-main { width: 441px; }
.group-struct { width: 470px; }
.group-ops { flex: 1; border-right: none; }

.btns {
    display: grid;
    height: 80px;
}

.group-main .btns { grid-template-columns: 84px 78px 74px 70px 69px 65px; }
.group-struct .btns { grid-template-columns: 68px 90px 83px 86px 80px 62px; }
.group-ops .btns { grid-template-columns: 88px 84px 78px 68px 64px; }

.btn {
    display: flex;
    flex-direction: column;
    align-items: center;
}

.btn-icon {
    height: 36px;
    display: flex;
    align-items: center;
    justify-content: center;
}

.btn-label {
    height: 39px;
    display: flex;
    align-items: center;
    justify-content: center;
    text-align: center;
    line-height: 14px;
    color: #0a7cf5;
    white-space: nowrap;
}

.btn-delete .btn-label {
    flex-direction: column;
    position: relative;
    top: -2px;
}

.del-more {
    width: 12px;
    height: 12px;
    color: #222;
    position: absolute;
    top: 33px;
}

.ic-big { width: 28px; height: 28px; }
.ic-gear { width: 31px; height: 31px; }
.ic-lock { width: 24px; height: 30px; }
.ic-glasses { width: 32px; height: 16px; }
.ic-code { width: 24px; height: 14px; }
.ic-split { width: 30px; height: 20px; }
.ic-rename { width: 24px; height: 24px; }
.ic-cross { width: 22px; height: 22px; }

.group-name {
    flex: 1;
    display: flex;
    align-items: center;
    justify-content: center;
    color: #333;
    position: relative;
    padding-top: 1px;
}

.expand {
    width: 11px;
    height: 11px;
    color: #888;
    position: absolute;
    right: 10px;
    top: 5px;
}

/* main area */
.work {
    display: flex;
    height: 495px;
    padding-top: 1px;
    border-bottom: 1px solid #eee;
}

.strip {
    width: 27px;
    flex: none;
    display: flex;
    flex-direction: column;
    justify-content: space-between;
    align-items: center;
    border-right: 1px solid #eee;
    padding-bottom: 4px;
}

.strip-right {
    border-right: none;
    border-left: 1px solid #eee;
}

.strip-top {
    width: 100%;
    background-color: #f2f2f2;
    display: flex;
    flex-direction: column;
}

.strip-item {
    height: 23px;
    display: flex;
    align-items: center;
    justify-content: center;
}

.strip-item.active {
    background-color: #a0d000;
    margin-left: 1px;
    height: 24px;
}

.db-panel {
    width: 296px;
    flex: none;
    border-right: 1px solid #eee;
}

.panel-head {
    height: 26px;
    display: flex;
    align-items: center;
    padding-left: 6px;
    border-bottom: 1px solid #eee;
    gap: 8px;
}

.panel-title {
    width: 210px;
    margin-left: -2px;
}

.pin {
    width: 10px;
    height: 15px;
}

.minus-box {
    width: 12px;
    height: 12px;
    border-radius: 2px;
    background-color: #ff8a00;
    position: relative;
    margin-left: -1px;
}

.minus-box::after {
    content: "";
    position: absolute;
    left: 3px;
    top: 5px;
    width: 6px;
    height: 2px;
    background-color: white;
}

.panel-tools {
    height: 28px;
    display: flex;
    align-items: center;
    padding-left: 7px;
}

.tool-dots {
    margin-left: 14px;
}

.tool-updown {
    width: 10px;
    height: 18px;
    margin-left: 16px;
}

.tree-mode {
    width: 50px;
    height: 25px;
    border: 1px solid #eee;
    display: flex;
    align-items: center;
    gap: 8px;
    padding-left: 9px;
    margin-left: 10px;
}

.panel-search {
    width: 162px;
    height: 25px;
    margin-left: 1px;
    border: 1px solid #eee;
    display: flex;
    align-items: center;
    justify-content: space-between;
    padding: 0 7px 0 12px;
    color: #999;
}

.tree {
    list-style: none;
    margin: 0;
    padding: 0 6px 0 2px;
}

.tree li {
    height: 24px;
    display: flex;
    align-items: center;
    gap: 4px;
    border-radius: 3px;
}

.tree .caret {
    width: 8px;
    height: 8px;
    color: #666;
}

.lvl0 { padding-left: 5px; }
.lvl1 { padding-left: 24px; }
.lvl2 { padding-left: 44px; }

.tree .caret + svg {
    margin-left: 2px;
    margin-right: 1px;
}

.tree .lvl0 .caret + svg {
    margin-right: 0;
}

.tree .lvl1 .caret + svg {
    width: 16px;
    height: 16px;
    margin-left: 1px;
    margin-right: 0;
}

.tree .selected {
    background-color: #eaf4fd;
}

/* table */
.data {
    width: 950px;
    flex: none;
    display: flex;
    flex-direction: column;
}

.tabs {
    height: 26px;
    display: flex;
    justify-content: space-between;
    background-color: #f8f8f8;
    border-bottom: 1px solid #eee;
}

.tab {
    width: 104px;
    background-color: #e4f6cf;
    display: flex;
    align-items: center;
    gap: 6px;
    padding-left: 3px;
    color: #1e6fd0;
}

.tab-close {
    width: 10px;
    height: 10px;
    color: #666;
}

.tabs-end {
    display: flex;
}

.tabs-btn {
    width: 18px;
    border-left: 1px solid #eee;
    display: flex;
    align-items: center;
    justify-content: center;
}

.plus {
    color: #9bcf00;
    font-size: 18px;
    font-weight: 700;
    line-height: 1;
}

.cols,
.row {
    display: grid;
    grid-template-columns: 27px 308px 308px 307px;
}

.cols {
    height: 50px;
    border-bottom: 1px solid #e8e8e8;
}

.col-cell {
    border-right: 1px solid #e8e8e8;
    padding: 0 5px;
}

.col-cell:first-child {
    border-left: 1px solid #e8e8e8;
}

.col-cell:last-child {
    border-right: none;
}

.col-name {
    height: 18px;
    display: flex;
    align-items: center;
    gap: 2px;
    margin: 0 0 3px -2px;
}

.col-badge {
    width: 13px;
    height: 13px;
    margin-left: 2px;
    border-radius: 50%;
    background-color: #3f4fae;
    color: white;
    font-size: 8px;
    font-weight: 700;
    display: flex;
    align-items: center;
    justify-content: center;
}

.col-filter {
    display: flex;
    gap: 2px;
}

.filter-input {
    width: 262px;
    height: 26px;
    border: 1px solid #eee;
    display: flex;
    align-items: center;
    justify-content: space-between;
    padding: 0 6px 0 13px;
    color: #999;
}

.col-cell:last-child .filter-input {
    width: 261px;
}

.filter-gear {
    width: 24px;
    height: 26px;
    border: 1px solid #eee;
    display: flex;
    align-items: center;
    justify-content: center;
}

.rows {
    height: 395px;
    overflow: hidden;
    position: relative;
}

.row {
    height: 27px;
    line-height: 27px;
    border-bottom: 1px solid #eee;
    color: #222;
}

.row > div {
    padding-left: 3px;
    border-right: 1px solid #e8e8e8;
    white-space: nowrap;
    overflow: hidden;
}

.row > div:nth-child(2) {
    padding-left: 2px;
}

.row > div:last-child {
    border-right: none;
}

.row .mark {
    display: flex;
    align-items: center;
    justify-content: center;
    padding: 0;
}

.mark i {
    width: 13px;
    height: 13px;
    border-radius: 50%;
    background-color: #666b70;
}

.row.alt { background-color: #eef7ea; }
.row.sel { background-color: #a6dfa6; }

.scroll-up,
.scroll-down {
    position: absolute;
    right: 3px;
    width: 0;
    height: 0;
    border-left: 4px solid transparent;
    border-right: 4px solid transparent;
}

.scroll-up {
    top: 7px;
    border-bottom: 6px solid #c4c4c4;
}

.scroll-down {
    bottom: 5px;
    border-top: 6px solid #c4c4c4;
}

.scroll-thumb {
    position: absolute;
    right: 2px;
    top: 18px;
    width: 6px;
    height: 276px;
    border-radius: 3px;
    background-color: rgba(90, 90, 90, 0.55);
}

.pager {
    flex: 1;
    display: flex;
    align-items: center;
    padding-left: 178px;
    border-top: 1px solid #eee;
    white-space: nowrap;
}

.pager-arrow {
    width: 10px;
    height: 14px;
    color: #6f7479;
}

.pager-arrow.prev { margin-left: 17px; }
.pager-arrow.next { margin-left: 11px; }

.page-num {
    width: 30px;
    height: 21px;
    display: flex;
    align-items: center;
    justify-content: center;
    margin-left: 2px;
}

.page-num.current {
    background-color: #eaf4fd;
    color: #0a7cf5;
    border-radius: 2px;
    margin-left: 12px;
}

.goto {
    margin-left: 16px;
}

.goto-input {
    width: 47px;
    height: 21px;
    border: 1px solid #eee;
    margin-left: 5px;
    line-height: 19px;
    padding-left: 5px;
}

.goto-after {
    margin-left: 6px;
}

.page-size {
    width: 36px;
    height: 21px;
    border: 1px solid #eee;
    margin-left: 7px;
    display: flex;
    align-items: center;
    justify-content: space-between;
    padding: 0 2px 0 3px;
}

.picked {
    margin-left: 8px;
}

/* bottom */
.tool-strip {
    height: 27px;
    background-color: #f7f7f7;
    display: flex;
    justify-content: space-between;
    align-items: center;
    border-bottom: 1px solid #eee;
}

.tool-icons {
    width: 117px;
    height: 26px;
    background-color: #eeeeee;
    display: flex;
    align-items: center;
    justify-content: space-between;
    padding: 0 9px 0 8px;
}

.tool-plus {
    margin-right: 6px;
}

.status {
    height: 19px;
    display: flex;
    align-items: center;
    border-bottom: 1px solid #eee;
    white-space: nowrap;
    padding-left: 2px;
}

.status-text {
    width: 904px;
    padding-left: 5px;
    font-size: 12.5px;
}

.bar {
    color: #ff8a00;
    font-weight: 400;
}

.status-combo {
    width: 128px;
    display: flex;
    align-items: center;
    justify-content: space-between;
    color: #aaa;
    padding-right: 2px;
    border-right: 1px solid #eee;
}

.crumbs {
    display: flex;
    align-items: center;
    gap: 3px;
    padding-left: 2px;
}

.crumbs em {
    font-style: normal;
    color: #999;
    margin: 0 2px;
}

.status-dots {
    width: 10px;
    height: 4px;
    margin-left: 8px;
    color: #666;
}

/* dialog over the table */
.dialog {
    position: absolute;
    left: 401px;
    top: 305px;
    width: 499px;
    height: 89px;
    background-color: white;
    box-shadow: 0 1px 7px rgba(0, 0, 0, 0.35);
    display: flex;
    flex-direction: column;
}

.dialog-head {
    height: 28px;
    display: flex;
    align-items: center;
    padding: 0 12px 0 6px;
    gap: 6px;
    border-bottom: 1px solid #eee;
}

.dialog-title {
    flex: 1;
}

.dialog-close {
    width: 10px;
    height: 10px;
    color: #666;
}

.dialog-body {
    height: 33px;
    padding: 6px;
    border-bottom: 1px solid #eee;
}

.progress {
    height: 20px;
    background-color: #e6e7e9;
    border-radius: 4px;
    text-align: center;
    line-height: 20px;
    font-weight: 600;
    color: #444;
}

.dialog-foot {
    flex: 1;
    display: flex;
    justify-content: flex-end;
    align-items: center;
    padding-right: 3px;
}

.cancel {
    width: 110px;
    height: 24px;
    border: none;
    border-radius: 3px;
    background-color: #ff3b22;
    color: white;
    font-family: inherit;
    font-size: 12.3px;
    font-weight: 700;
}

.watermark {
    position: absolute;
    right: 7px;
    top: 672px;
    font-size: 12.3px;
    color: rgba(90, 90, 90, 0.8);
    white-space: nowrap;
}
```
